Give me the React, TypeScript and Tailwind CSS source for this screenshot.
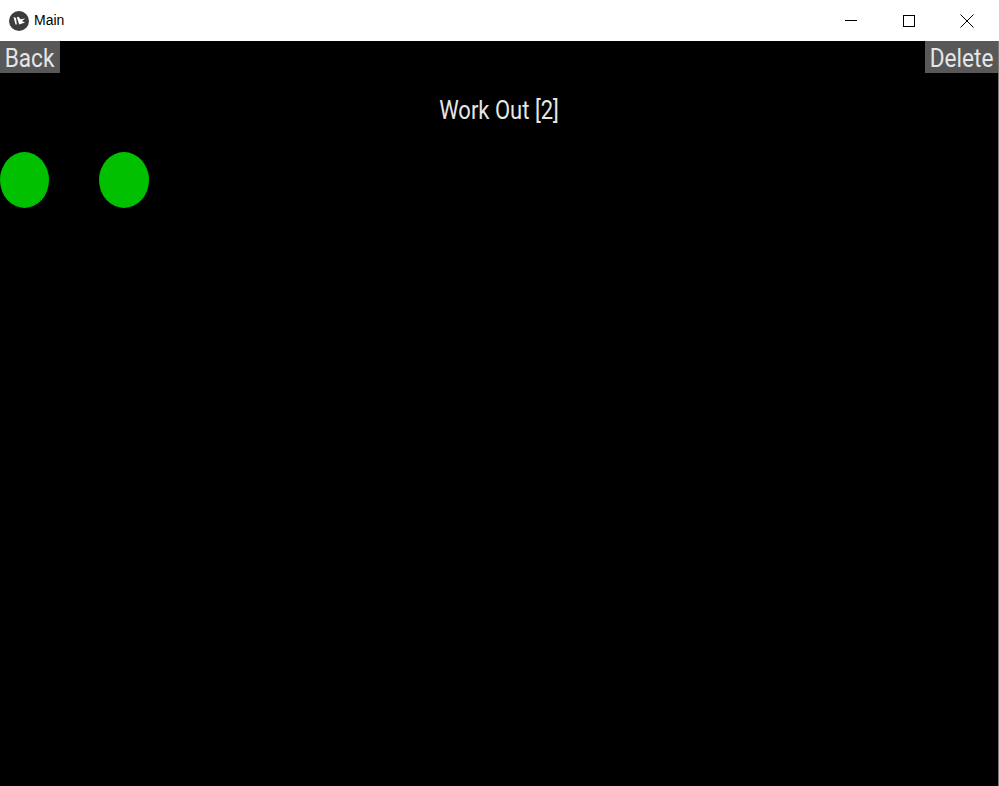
import React from "react";

export default function App() {
  return (
    <div className="w-[999px] h-[786px] flex flex-col bg-black overflow-hidden" style={{ fontFamily: "Roboto, 'Noto Sans', sans-serif" }}>
      {/* Title bar */}
      <div className="h-[41px] bg-white flex items-center shrink-0">
        <div className="ml-[9px] w-[20px] h-[20px] flex items-center justify-center">
          <svg width="20" height="20" viewBox="0 0 20 20">
            <circle cx="10" cy="10" r="10" fill="#3c3c3c" />
            <path d="M4.5 6 L6.5 13.5 L7.8 13.5 L7 7 Z" fill="#fff" />
            <path d="M7.8 6.2 L10.2 13.5 L16 11.5 L13 10 L16.2 7.6 L11.5 8.2 L9.5 5.8 Z" fill="#fff" />
          </svg>
        </div>
        <span className="ml-[5px] text-[14px] text-black" style={{ fontFamily: "'Liberation Sans', Arial, sans-serif" }}>Main</span>
        <div className="ml-auto flex h-full mr-[3px]">
          <div className="w-[58px] h-full flex items-center justify-center">
            <div className="w-[12px] h-px bg-black" />
          </div>
          <div className="w-[58px] h-full flex items-center justify-center">
            <div className="w-[12px] h-[12px] border border-black" />
          </div>
          <div className="w-[58px] h-full flex items-center justify-center">
            <svg width="14" height="14" viewBox="0 0 14 14">
              <path d="M0.5 0.5 L13.5 13.5 M13.5 0.5 L0.5 13.5" stroke="#000" strokeWidth="1" />
            </svg>
          </div>
        </div>
      </div>
      {/* Content */}
      <div className="flex-1 flex flex-col border-r border-[#7a7a7a]">
        <div className="flex justify-between h-[32px]">
          <div className="w-[60px] h-[32px] bg-[#585858] flex items-center justify-center pt-[1px]">
            <span className="text-[#e6e6e6] text-[26px] leading-none scale-x-[0.87]">Back</span>
          </div>
          <div className="w-[73px] h-[32px] bg-[#585858] flex items-center justify-center pt-[1px]">
            <span className="text-[#e6e6e6] text-[26px] leading-none scale-x-[0.87]">Delete</span>
          </div>
        </div>
        <div className="h-[79px] flex items-center justify-center pb-[4px]">
          <span className="text-[#e6e6e6] text-[25px] leading-none scale-x-[0.88]">Work Out [2]</span>
        </div>
        <div className="flex gap-[50px]">
          <div className="w-[49px] h-[56px] rounded-[50%] bg-[#00c000]" />
          <div className="w-[50px] h-[56px] rounded-[50%] bg-[#00c000]" />
        </div>
      </div>
    </div>
  );
}
